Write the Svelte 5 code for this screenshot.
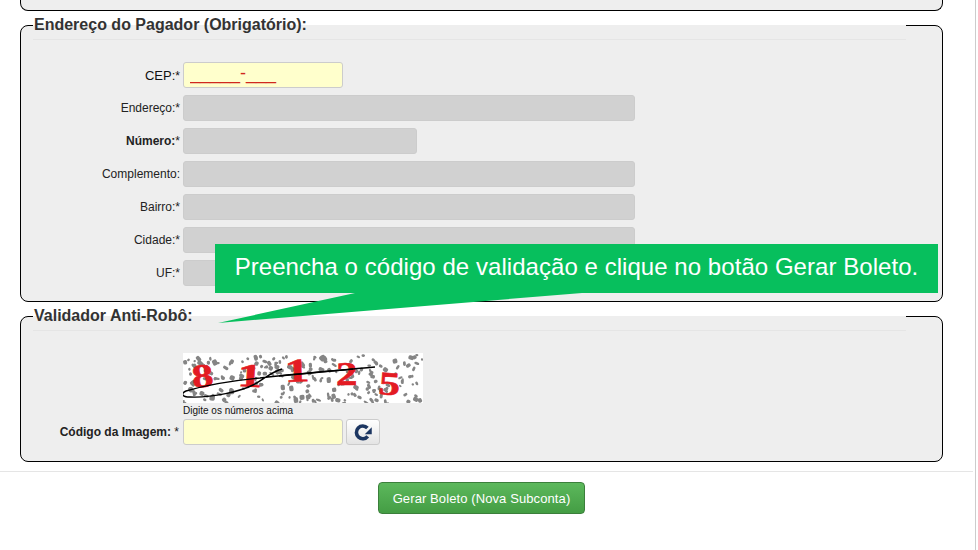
<script>
  const enderecoRows = [
    { label: 'Endereço:', size: 'wide' },
    { label: 'Número:', size: 'mid', bold: true },
    { label: 'Complemento:', size: 'wide', noStar: true },
    { label: 'Bairro:', size: 'wide' },
    { label: 'Cidade:', size: 'wide' },
    { label: 'UF:', size: 'wide' }
  ];

  // speckle behind the captcha digits, fixed seed so it stays the same
  let seed = 4711;
  function rnd() {
    seed = (seed * 16807) % 2147483647;
    return seed / 2147483647;
  }
  const blobs = [];
  for (let i = 0; i < 235; i++) {
    blobs.push({
      x: +(rnd() * 240).toFixed(1),
      y: +(rnd() * 50).toFixed(1),
      w: +(2 + rnd() * 4).toFixed(1),
      h: +(2 + rnd() * 3).toFixed(1),
      r: +(rnd() * 90).toFixed(0)
    });
  }

  const digits = [
    { d: '8', x: 10, y: 35, r: -6, sx: 1.3 },
    { d: '1', x: 54, y: 33, r: 3, sx: 1.5 },
    { d: '1', x: 102, y: 29, r: -2, sx: 1.5 },
    { d: '2', x: 153, y: 32, r: 0, sx: 1.3 },
    { d: '5', x: 195, y: 41, r: 4, sx: 1.3 }
  ];
</script>

<div class="page">
  <div class="stub"></div>

  <fieldset class="box">
    <legend>Endereço do Pagador (Obrigatório):</legend>
    <div class="rows">
      <div class="row">
        <label for="cep" class="big">CEP:<span class="star">*</span></label>
        <input id="cep" class="short mask" value="_____-___" />
      </div>
      {#each enderecoRows as row}
        <div class="row">
          <label class:bold={row.bold}>{row.label}{#if !row.noStar}<span class="star">*</span>{/if}</label>
          <input class={row.size} disabled />
        </div>
      {/each}
    </div>
  </fieldset>

  <fieldset class="box robot">
    <legend>Validador Anti-Robô:</legend>
    <div class="captcha">
      <svg width="240" height="50" viewBox="0 0 240 50">
        <rect width="240" height="50" fill="#fff" />
        {#each blobs as b}
          <rect x={b.x} y={b.y} width={b.w} height={b.h} rx="1.6" fill="#858585" transform="rotate({b.r} {b.x} {b.y})" />
        {/each}
        {#each digits as n}
          <text class="digit" transform="translate({n.x} {n.y}) rotate({n.r}) scale({n.sx} 1)">{n.d}</text>
        {/each}
        <path d="M99 16C88 19 80 27 70 32C58 38 30 45 7 44C-2 44-2 40 3 38C20 33 45 28 77 25C110 21 150 18 192 14" fill="none" stroke="#000" stroke-width="1.4" />
        <path d="M96 23L170 16" fill="none" stroke="#000" stroke-width="1.4" />
      </svg>
      <small>Digite os números acima</small>
    </div>
    <div class="row">
      <label for="codigo" class="bold">Código da Imagem: <span class="star">*</span></label>
      <input id="codigo" class="short" />
      <button class="reload" type="button" aria-label="Recarregar">
        <svg width="19" height="19" viewBox="0 0 18 18">
          <path d="M13 12.6A6 6 0 1 1 12.7 4.8" fill="none" stroke="#1c3661" stroke-width="3.4" />
          <path d="M16.8 4V10.6H10.2Z" fill="#1c3661" />
        </svg>
      </button>
    </div>
  </fieldset>

  <hr />

  <div class="actions">
    <button class="gerar" type="button">Gerar Boleto (Nova Subconta)</button>
  </div>

  <div class="callout">
    Preencha o código de validação e clique no botão Gerar Boleto.
    <svg class="tail" width="370" height="31" viewBox="0 0 370 31">
      <polygon points="137,0 0,30 364,0" fill="#07bf5d" />
    </svg>
  </div>
</div>

<style>
  :global(body) {
    margin: 0;
    background: #fff;
    overflow: hidden;
  }
  * {
    box-sizing: border-box;
  }
  .page {
    position: relative;
    width: 976px;
    height: 550px;
    border-right: 1px solid #ccc;
    font-family: "Liberation Sans", Arial, sans-serif;
    font-size: 12px;
    color: #222;
  }
  .stub {
    width: 923px;
    height: 11px;
    margin-left: 20px;
    background: #eee;
    border: 1px solid #000;
    border-top: 0;
    border-radius: 0 0 8px 8px;
  }
  .box {
    width: 923px;
    margin: 0 0 0 20px;
    padding: 0 0 15px;
    background: #eee;
    border: 1px solid #000;
    border-radius: 8px;
    min-width: 0;
  }
  .robot {
    padding-bottom: 16px;
  }
  legend {
    width: 873px;
    margin-left: 12px;
    padding: 0 0 0 1px;
    font-size: 16px;
    font-weight: bold;
    line-height: 28px;
    color: #333;
    border-bottom: 1px solid #e5e5e5;
  }
  .rows {
    display: flex;
    flex-direction: column;
    gap: 7px;
    margin-top: 22px;
  }
  .row {
    display: flex;
    align-items: center;
  }
  label {
    width: 159px;
    margin-right: 3px;
    text-align: right;
  }
  .robot label {
    width: 158px;
    margin-right: 4px;
  }
  .bold {
    font-weight: bold;
  }
  .big {
    font-size: 13px;
    color: #111;
  }
  .star {
    font-size: 12px;
    font-weight: normal;
  }
  input {
    height: 26px;
    padding: 0 6px;
    border: 1px solid #ccc;
    border-radius: 3px;
    background: #ffc;
    font-family: inherit;
    outline: none;
  }
  input:disabled {
    background: #d1d1d1;
  }
  .short {
    width: 160px;
  }
  .mid {
    width: 234px;
  }
  .wide {
    width: 452px;
  }
  .mask {
    padding-bottom: 4px;
    font-size: 18px;
    color: #d0281e;
  }
  .captcha {
    margin: 22px 0 1px 162px;
  }
  .captcha svg {
    display: block;
  }
  .digit {
    font-family: "Liberation Serif", serif;
    font-weight: bold;
    font-size: 33px;
    fill: #e31b23;
    stroke: #e31b23;
    stroke-width: 0.6;
  }
  small {
    display: block;
    height: 15px;
    font-size: 10px;
    line-height: 16px;
    color: #111;
  }
  .reload {
    display: flex;
    align-items: center;
    justify-content: center;
    width: 34px;
    height: 26px;
    margin-left: 3px;
    padding: 0;
    border: 1px solid #ccc;
    border-radius: 3px;
    background: linear-gradient(#fff, #e4e4e4);
  }
  hr {
    width: 973px;
    height: 1px;
    margin: 9px 0 10px;
    border: 0;
    background: #e5e5e5;
  }
  .actions {
    display: flex;
    justify-content: center;
    width: 963px;
  }
  .gerar {
    width: 207px;
    height: 32px;
    padding: 0;
    border: 1px solid #3b7f3b;
    border-radius: 4px;
    background: linear-gradient(#5cb85c, #449d44);
    color: #fff;
    font-family: inherit;
    font-size: 13px;
    letter-spacing: 0.1px;
  }
  .callout {
    position: absolute;
    left: 215px;
    top: 244px;
    width: 723px;
    height: 49px;
    background: #07bf5d;
    color: #fff;
    font-size: 24px;
    letter-spacing: 0.05px;
    line-height: 46px;
    text-align: center;
    white-space: nowrap;
  }
  .tail {
    position: absolute;
    left: 3px;
    top: 49px;
  }
</style>
